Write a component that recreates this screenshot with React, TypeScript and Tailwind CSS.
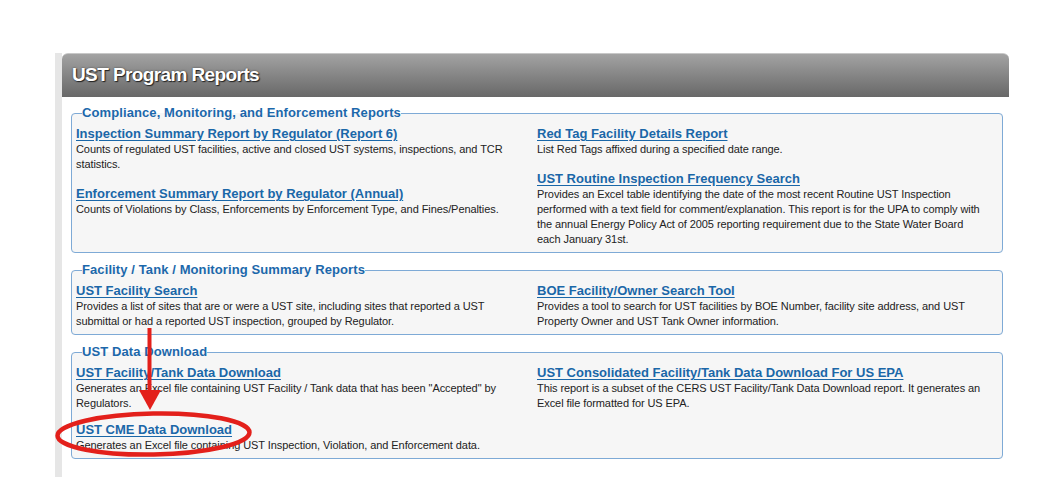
import React from 'react'

type Report = {
  title: string
  desc: string
}

type Section = {
  legend: string
  tight?: boolean
  left: Report[]
  right: Report[]
}

const sections: Section[] = [
  {
    legend: 'Compliance, Monitoring, and Enforcement Reports',
    left: [
      {
        title: 'Inspection Summary Report by Regulator (Report 6)',
        desc: 'Counts of regulated UST facilities, active and closed UST systems, inspections, and TCR statistics.',
      },
      {
        title: 'Enforcement Summary Report by Regulator (Annual)',
        desc: 'Counts of Violations by Class, Enforcements by Enforcement Type, and Fines/Penalties.',
      },
    ],
    right: [
      {
        title: 'Red Tag Facility Details Report',
        desc: 'List Red Tags affixed during a specified date range.',
      },
      {
        title: 'UST Routine Inspection Frequency Search',
        desc: 'Provides an Excel table identifying the date of the most recent Routine UST Inspection performed with a text field for comment/explanation. This report is for the UPA to comply with the annual Energy Policy Act of 2005 reporting requirement due to the State Water Board each January 31st.',
      },
    ],
  },
  {
    legend: 'Facility / Tank / Monitoring Summary Reports',
    left: [
      {
        title: 'UST Facility Search',
        desc: 'Provides a list of sites that are or were a UST site, including sites that reported a UST submittal or had a reported UST inspection, grouped by Regulator.',
      },
    ],
    right: [
      {
        title: 'BOE Facility/Owner Search Tool',
        desc: 'Provides a tool to search for UST facilities by BOE Number, facility site address, and UST Property Owner and UST Tank Owner information.',
      },
    ],
  },
  {
    legend: 'UST Data Download',
    tight: true,
    left: [
      {
        title: 'UST Facility/Tank Data Download',
        desc: 'Generates an Excel file containing UST Facility / Tank data that has been "Accepted" by Regulators.',
      },
      {
        title: 'UST CME Data Download',
        desc: 'Generates an Excel file containing UST Inspection, Violation, and Enforcement data.',
      },
    ],
    right: [
      {
        title: 'UST Consolidated Facility/Tank Data Download For US EPA',
        desc: 'This report is a subset of the CERS UST Facility/Tank Data Download report. It generates an Excel file formatted for US EPA.',
      },
    ],
  },
]

function ReportItem({ item }: { item: Report }) {
  return (
    <div className="flex flex-col">
      <a href="#" className="text-[13px] leading-[17px] font-bold text-[#1a67a8] underline underline-offset-[2px]">
        {item.title}
      </a>
      <p className="text-[11px] leading-[15px] text-[#222] tracking-[-0.08px] pr-[13px]">{item.desc}</p>
    </div>
  )
}

function ReportSection({ section }: { section: Section }) {
  const colClass = section.tight ? 'flex flex-col gap-[10px]' : 'flex flex-col gap-[13px]'
  return (
    <fieldset className="border border-[#7eaad6] rounded-[4px] bg-[#f6f6f6] px-[4px] pt-[4px] pb-[5px]">
      <legend className="ml-[6px] text-[13px] leading-[16px] font-bold text-[#1c68ab] tracking-[0.1px]">
        {section.legend}
      </legend>
      <div className="grid grid-cols-2">
        <div className={colClass}>
          {section.left.map((r) => (
            <ReportItem key={r.title} item={r} />
          ))}
        </div>
        <div className={colClass}>
          {section.right.map((r) => (
            <ReportItem key={r.title} item={r} />
          ))}
        </div>
      </div>
    </fieldset>
  )
}

export default function App() {
  return (
    <div
      className="relative h-screen w-full bg-white pt-[53px] pl-[55px] overflow-hidden"
      style={{ fontFamily: '"Liberation Sans", Arial, sans-serif' }}
    >
      <div className="flex h-full w-[954px]">
        {/* left gray strip */}
        <div className="w-[7px] bg-[#e6e6e6]" />
        <div className="flex-1 flex flex-col bg-white">
          <div className="h-[44px] flex items-center pl-[10px] rounded-t-[6px] bg-gradient-to-b from-[#a3a3a3] via-[#858585] to-[#686868] border-t border-[#c8c8c8]">
            <h1 className="text-[19px] font-bold text-white tracking-[-0.6px] [text-shadow:1px_1px_1px_#222,0_0_2px_#444]">
              UST Program Reports
            </h1>
          </div>
          <div className="flex flex-col gap-[9px] pt-[8px] pl-[9px] pr-[6px]">
            {sections.map((s) => (
              <ReportSection key={s.legend} section={s} />
            ))}
          </div>
        </div>
      </div>

      {/* red annotation */}
      <svg className="absolute left-0 top-0 pointer-events-none" width="1037" height="477">
        <line x1="149.5" y1="328" x2="149.5" y2="394" stroke="#e3201b" strokeWidth="4" />
        <polygon points="139,390 161,390 150,410" fill="#e3201b" />
        <ellipse
          cx="153.5"
          cy="434"
          rx="96"
          ry="20.5"
          fill="none"
          stroke="#e3201b"
          strokeWidth="4.5"
          transform="rotate(-1 153.5 434)"
        />
      </svg>
    </div>
  )
}
